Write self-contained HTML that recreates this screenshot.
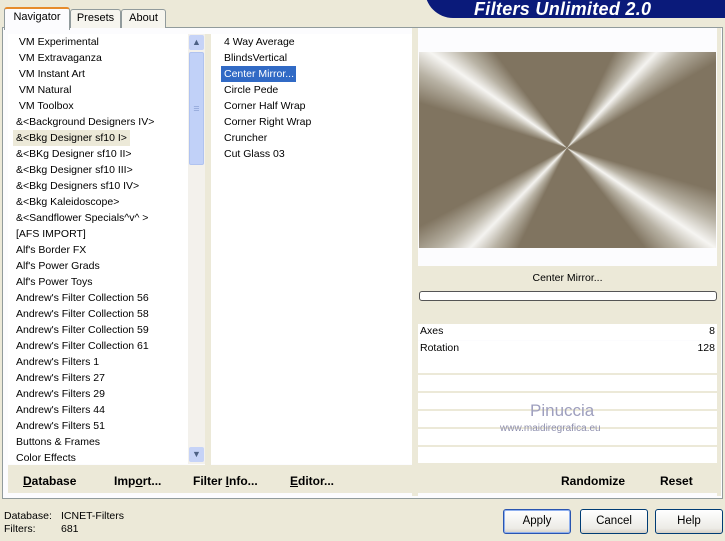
<!DOCTYPE html>
<html><head><style>
body{margin:0;width:725px;height:541px;background:#ece9d8;font-family:"Liberation Sans",sans-serif;font-size:10.5px;color:#000;position:relative;overflow:hidden}
.a{position:absolute}
.tab{position:absolute;top:9px;height:18px;background:#f6f5ee;border:1px solid #919b9c;border-bottom:none;border-radius:3px 3px 0 0;text-align:center;line-height:17px;font-size:11px}
.panel{position:absolute;left:2px;top:27px;width:719px;height:470px;background:#fcfcfe;border:1px solid #919b9c}
.list div{height:16px;line-height:16px;white-space:nowrap;padding-left:3px}
.btn{position:absolute;top:509px;width:66px;height:23px;border:1px solid #003c74;border-radius:3px;background:linear-gradient(#fff,#ecebe6 80%,#d6d0c5);text-align:center;line-height:23px;font-size:11.5px}
.bb{position:absolute;top:474px;font-weight:bold;font-size:12px}
.row{position:absolute;left:418px;width:299px;background:#fff}
</style></head><body>
<div class="a" style="left:425px;top:-20px;width:320px;height:38px;background:#0a1a7a;border-radius:0 0 0 28px"></div>
<div class="a" style="left:474px;top:-1px;color:#fff;font-weight:bold;font-style:italic;font-size:18px;letter-spacing:0.3px">Filters Unlimited 2.0</div>
<div class="panel"></div>
<div class="tab" style="left:4px;top:7px;width:64px;height:21px;background:#fcfcfe;border-top:2px solid #e68b2c;z-index:2">Navigator</div>
<div class="tab" style="left:70px;width:49px">Presets</div>
<div class="tab" style="left:121px;width:43px">About</div>
<div class="a" style="left:8px;top:34px;width:197px;height:430px;background:#fff"></div>
<div class="a list" style="left:13px;top:34px;width:175px">
<div>&nbsp;VM Experimental</div><div>&nbsp;VM Extravaganza</div><div>&nbsp;VM Instant Art</div><div>&nbsp;VM Natural</div><div>&nbsp;VM Toolbox</div><div>&amp;&lt;Background Designers IV&gt;</div><div style="background:#ece9d8;width:114px">&amp;&lt;Bkg Designer sf10 I&gt;</div><div>&amp;&lt;BKg Designer sf10 II&gt;</div><div>&amp;&lt;Bkg Designer sf10 III&gt;</div><div>&amp;&lt;Bkg Designers sf10 IV&gt;</div><div>&amp;&lt;Bkg Kaleidoscope&gt;</div><div>&amp;&lt;Sandflower Specials^v^ &gt;</div><div>[AFS IMPORT]</div><div>Alf's Border FX</div><div>Alf's Power Grads</div><div>Alf's Power Toys</div><div>Andrew's Filter Collection 56</div><div>Andrew's Filter Collection 58</div><div>Andrew's Filter Collection 59</div><div>Andrew's Filter Collection 61</div><div>Andrew's Filters 1</div><div>Andrew's Filters 27</div><div>Andrew's Filters 29</div><div>Andrew's Filters 44</div><div>Andrew's Filters 51</div><div>Buttons &amp; Frames</div><div>Color Effects</div></div>
<div class="a" style="left:188px;top:34px;width:17px;height:430px;background:#f3f1ec"></div>
<div class="a" style="left:189px;top:35px;width:15px;height:15px;background:#c6d3f7;border-radius:2px;color:#4d6185;font-size:9px;text-align:center;line-height:15px">&#9650;</div>
<div class="a" style="left:189px;top:52px;width:15px;height:113px;background:#c1d1f8;border:1px solid #b0c3f0;box-sizing:border-box;border-radius:2px;color:#8ea3d6;text-align:center;line-height:113px">≡</div>
<div class="a" style="left:189px;top:447px;width:15px;height:15px;background:#c6d3f7;border-radius:2px;color:#4d6185;font-size:9px;text-align:center;line-height:15px">&#9660;</div>
<div class="a" style="left:205px;top:34px;width:6px;height:431px;background:#ece9d8"></div>
<div class="a" style="left:211px;top:34px;width:201px;height:430px;background:#fff"></div>
<div class="a list" style="left:221px;top:34px">
<div>4 Way Average</div><div>BlindsVertical</div><div style="background:#316ac5;color:#fff;width:72px">Center Mirror...</div><div>Circle Pede</div><div>Corner Half Wrap</div><div>Corner Right Wrap</div><div>Cruncher</div><div>Cut Glass 03</div></div>
<div class="a" style="left:412px;top:28px;width:6px;height:468px;background:#ece9d8"></div>
<div class="a" style="left:717px;top:28px;width:4px;height:468px;background:#ece9d8"></div>
<div class="a" style="left:419px;top:52px;width:297px;height:196px;background:conic-gradient(from 0deg at 148px 96px,#807460 0deg,#807460 26deg,#b8b2a4 36deg,#f4f3f0 43deg,#b8b2a4 50deg,#807460 60deg,#807460 106deg,#b8b2a4 116deg,#f6f5f2 124deg,#b8b2a4 132deg,#807460 142deg,#807460 206deg,#b8b2a4 216deg,#f4f3f0 224deg,#b8b2a4 232deg,#807460 242deg,#807460 287deg,#b8b2a4 297deg,#f6f5f2 305deg,#b8b2a4 313deg,#807460 323deg)"></div>
<div class="a" style="left:418px;top:266px;width:299px;height:58px;background:#ece9d8"></div>
<div class="a" style="left:418px;top:272px;width:299px;text-align:center">Center Mirror...</div>
<div class="a" style="left:419px;top:291px;width:296px;height:8px;border:1px solid #555;border-radius:3px;background:#fff"></div>
<div class="row" style="top:324px;height:16px"><span class="a" style="left:2px;top:1px">Axes</span><span class="a" style="right:2px;top:1px">8</span></div>
<div class="row" style="top:341px;height:16px"><span class="a" style="left:2px;top:1px">Rotation</span><span class="a" style="right:2px;top:1px">128</span></div>
<div class="a" style="left:418px;top:357px;width:299px;height:109px;background:repeating-linear-gradient(#fff 0 16px,#ece9d8 16px 18px)"></div>
<div class="a" style="left:530px;top:401px;color:#9e9fbe;font-size:17px">Pinuccia</div>
<div class="a" style="left:500px;top:423px;color:#8e8fae;font-size:10px">www.maidiregrafica.eu</div>
<div class="a" style="left:8px;top:465px;width:404px;height:28px;background:#ece9d8"></div>
<div class="a" style="left:418px;top:465px;width:299px;height:28px;background:#ece9d8"></div>
<div class="bb" style="left:23px"><u>D</u>atabase</div>
<div class="bb" style="left:114px">Imp<u>o</u>rt...</div>
<div class="bb" style="left:193px">Filter <u>I</u>nfo...</div>
<div class="bb" style="left:290px"><u>E</u>ditor...</div>
<div class="bb" style="left:561px">Randomize</div>
<div class="bb" style="left:660px">Reset</div>
<div class="a" style="left:4px;top:510px;line-height:13px">Database:<br>Filters:</div>
<div class="a" style="left:61px;top:510px;line-height:13px">ICNET-Filters<br>681</div>
<div class="btn" style="left:503px;border-color:#2a55b0;box-shadow:inset 0 0 0 1px #8fb0ee">Apply</div>
<div class="btn" style="left:580px">Cancel</div>
<div class="btn" style="left:655px">Help</div>
</body></html>
